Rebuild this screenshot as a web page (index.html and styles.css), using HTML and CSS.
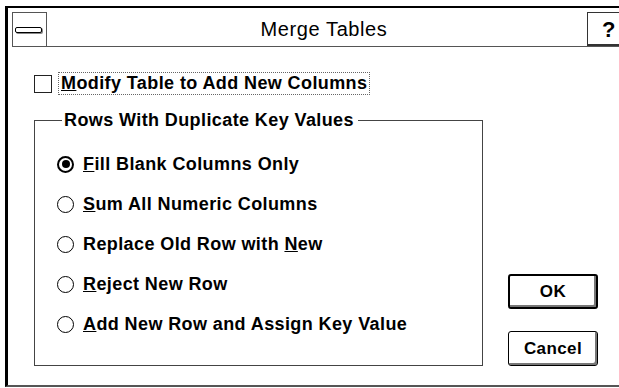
FILE: index.html
```html
<!DOCTYPE html>
<html lang="en">
<head>
    <meta charset="UTF-8">
    <meta name="viewport" content="width=device-width, initial-scale=1.0">
    <title>Merge Tables</title>
    <link rel="stylesheet" href="styles.css">
</head>
<body>
    <div class="dialog">
        <div class="titlebar">
            <div class="sysmenu"><span class="sysmenu-bar"></span></div>
            <div class="title">Merge Tables</div>
            <div class="help">?</div>
        </div>

        <div class="content">
            <div class="main-col">
                <label class="check-row">
                    <span class="checkbox"></span>
                    <span class="focus"><u>M</u>odify Table to Add New Columns</span>
                </label>

                <fieldset class="group">
                    <legend>Rows With Duplicate Key Values</legend>
                    <div class="radio-row"><span class="radio checked"></span><span><u>F</u>ill Blank Columns Only</span></div>
                    <div class="radio-row"><span class="radio"></span><span><u>S</u>um All Numeric Columns</span></div>
                    <div class="radio-row"><span class="radio"></span><span>Replace Old Row with <u>N</u>ew</span></div>
                    <div class="radio-row"><span class="radio"></span><span><u>R</u>eject New Row</span></div>
                    <div class="radio-row"><span class="radio"></span><span><u>A</u>dd New Row and Assign Key Value</span></div>
                </fieldset>
            </div>

            <div class="buttons">
                <button class="btn default">OK</button>
                <button class="btn">Cancel</button>
            </div>
        </div>
    </div>
</body>
</html>
```

FILE: styles.css
```css
body {
    margin: 0;
    padding: 6px 0 0 5px;
    width: 619px;
    height: 388px;
    box-sizing: border-box;
    overflow: hidden;
    background: #fff;
    color: #000;
    font-family: "Liberation Sans", Arial, sans-serif;
}
.dialog {
    width: 626px;
    height: 381px;
    box-sizing: border-box;
    border-left: 3px solid #000;
    border-top: 2px solid #000;
    border-bottom: 2px solid #555;
    padding: 4px 0 0 4px;
}
.titlebar {
    display: flex;
    height: 35px;
    box-sizing: border-box;
    border-bottom: 1px solid #555;
}
.sysmenu {
    width: 35px;
    box-sizing: border-box;
    border: 1px solid #555;
    border-bottom: none;
    display: flex;
    align-items: center;
    padding-left: 2px;
}
.sysmenu-bar {
    width: 25px;
    height: 4px;
    border: 1.5px solid #000;
    border-radius: 2px;
    background: #fff;
    box-shadow: 1px 1px 0 #888;
}
.title {
    flex: 1;
    text-align: center;
    font-size: 20px;
    letter-spacing: 0.6px;
    line-height: 34px;
    padding-left: 14px;
}
.help {
    width: 44px;
    box-sizing: border-box;
    border-left: 1px solid #333;
    border-top: 1px solid #333;
    box-shadow: inset 0 -2px 0 #333;
    padding-left: 14px;
    font-size: 22px;
    font-weight: bold;
    line-height: 33px;
}
.content {
    display: flex;
    padding: 25px 0 0 22px;
    font-size: 18px;
    font-weight: bold;
    letter-spacing: 0.4px;
}
.check-row {
    display: flex;
    align-items: center;
    height: 23px;
}
.checkbox {
    width: 18px;
    height: 18px;
    box-sizing: border-box;
    border: 1px solid #222;
    margin-right: 6px;
}
.focus {
    border: 1px dotted #666;
    padding: 0 2px;
    line-height: 21px;
}
.group {
    width: 449px;
    height: 256px;
    box-sizing: border-box;
    margin: 15px 0 0;
    padding: 14px 0 0 22px;
    border: 1px solid #444;
}
.group legend {
    margin-left: 5px;
    padding: 0 4px 0 2px;
    line-height: 20px;
}
.radio-row {
    display: flex;
    align-items: center;
    height: 40px;
}
.radio {
    width: 17px;
    height: 17px;
    box-sizing: border-box;
    border: 1px solid #000;
    border-radius: 50%;
    margin-right: 9px;
    display: flex;
    align-items: center;
    justify-content: center;
}
.radio.checked {
    border-width: 2px;
}
.radio.checked::after {
    content: "";
    width: 8px;
    height: 8px;
    border-radius: 50%;
    background: #000;
}
.buttons {
    display: flex;
    flex-direction: column;
    justify-content: flex-end;
    gap: 22px;
    margin-left: 25px;
}
.btn {
    width: 90px;
    height: 35px;
    background: #fff;
    border: 1px solid #000;
    border-radius: 3px;
    box-shadow: inset -2px -2px 0 #777;
    font-family: "Liberation Sans", Arial, sans-serif;
    font-size: 17px;
    font-weight: bold;
    letter-spacing: 0.4px;
    color: #000;
    padding: 0;
}
.btn.default {
    border-width: 2px;
}
```
